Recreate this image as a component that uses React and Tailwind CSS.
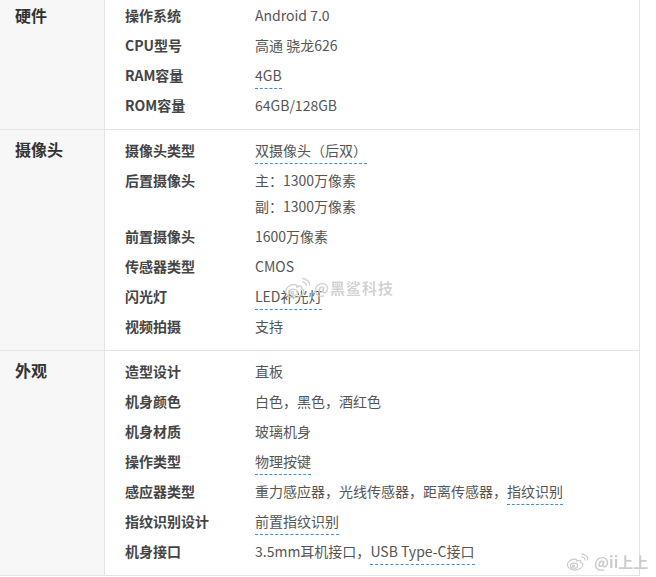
const sections = [
  {
    title: '硬件',
    first: true,
    rows: [
      { label: '操作系统', values: [['Android 7.0']] },
      { label: 'CPU型号', values: [['高通 骁龙626']] },
      { label: 'RAM容量', values: [[{ link: '4GB' }]] },
      { label: 'ROM容量', values: [['64GB/128GB']] },
    ],
  },
  {
    title: '摄像头',
    rows: [
      { label: '摄像头类型', values: [[{ link: '双摄像头（后双）' }]] },
      { label: '后置摄像头', values: [['主：1300万像素'], ['副：1300万像素']] },
      { label: '前置摄像头', values: [['1600万像素']] },
      { label: '传感器类型', values: [['CMOS']] },
      { label: '闪光灯', values: [[{ link: 'LED补光灯' }]] },
      { label: '视频拍摄', values: [['支持']] },
    ],
  },
  {
    title: '外观',
    rows: [
      { label: '造型设计', values: [['直板']] },
      { label: '机身颜色', values: [['白色，黑色，酒红色']] },
      { label: '机身材质', values: [['玻璃机身']] },
      { label: '操作类型', values: [[{ link: '物理按键' }]] },
      { label: '感应器类型', values: [['重力感应器，光线传感器，距离传感器，', { link: '指纹识别' }]] },
      { label: '指纹识别设计', values: [[{ link: '前置指纹识别' }]] },
      { label: '机身接口', values: [['3.5mm耳机接口，', { link: 'USB Type-C接口' }]] },
    ],
  },
]

function WeiboLogo({ className }) {
  return (
    <svg viewBox="0 0 30 26" className={className} fill="none" stroke="currentColor" strokeWidth="1.6">
      <path d="M12 9c-6 0-10 4-10 8 0 4 5 7 10 7s11-3 11-7c0-2-2-3-3-3 1-2 0-4-3-3l-2 1c0-2-1-3-3-3z" />
      <ellipse cx="11" cy="18" rx="5" ry="3.5" />
      <circle cx="10" cy="18.5" r="1.4" />
      <path d="M21 6a5 5 0 0 1 5 5" />
      <path d="M21 2a9 9 0 0 1 9 9" />
    </svg>
  )
}

function Row({ row }) {
  return (
    <div className="flex py-[2px]">
      <div className="w-[130px] shrink-0 leading-[26px] text-[14px] font-bold text-[#444]">{row.label}</div>
      <div className="flex flex-col text-[14px] text-[#555]">
        {row.values.map((line, i) => (
          <div key={i} className="leading-[26px] whitespace-nowrap">
            {line.map((part, j) =>
              typeof part === 'string' ? (
                <span key={j}>{part}</span>
              ) : (
                <span key={j} className="border-b border-dashed border-[#3b8ee0] pb-[3px]">{part.link}</span>
              )
            )}
          </div>
        ))}
      </div>
    </div>
  )
}

export default function App() {
  return (
    <div
      className="relative w-[656px] h-[577px] overflow-hidden bg-white"
      style={{ fontFamily: '"Noto Sans CJK SC", "Noto Sans", sans-serif' }}
    >
      <div className="w-[640px] border-r border-[#e2e2e2]">
        {sections.map((s) => (
          <div key={s.title} className="flex border-b border-[#e4e4e4]">
            <div className="w-[105px] shrink-0 bg-[#f7f7f7] border-r border-[#e4e4e4] pl-[15px]">
              <div className={`${s.first ? 'pt-[2px]' : 'pt-[6px]'} leading-[26px] text-[16px] font-bold text-[#333]`}>
                {s.title}
              </div>
            </div>
            <div className={`flex-1 pl-[20px] ${s.first ? 'pt-0 pb-[9px]' : 'pt-[5px] pb-[9px]'}`}>
              {s.rows.map((r) => (
                <Row key={r.label} row={r} />
              ))}
            </div>
          </div>
        ))}
      </div>

      <div className="absolute left-[284px] top-[276px] flex items-center gap-[4px] text-[#cfcfcf] opacity-90">
        <WeiboLogo className="w-[26px] h-[24px]" />
        <span className="text-[15px] font-bold tracking-[1px] blur-[0.6px]">@黑鲨科技</span>
      </div>
      <div className="absolute left-[566px] top-[551px] flex items-center gap-[6px] text-[#cccccc]">
        <WeiboLogo className="w-[22px] h-[20px]" />
        <span className="text-[15px] font-bold blur-[0.6px]">@ii上上</span>
      </div>
    </div>
  )
}
